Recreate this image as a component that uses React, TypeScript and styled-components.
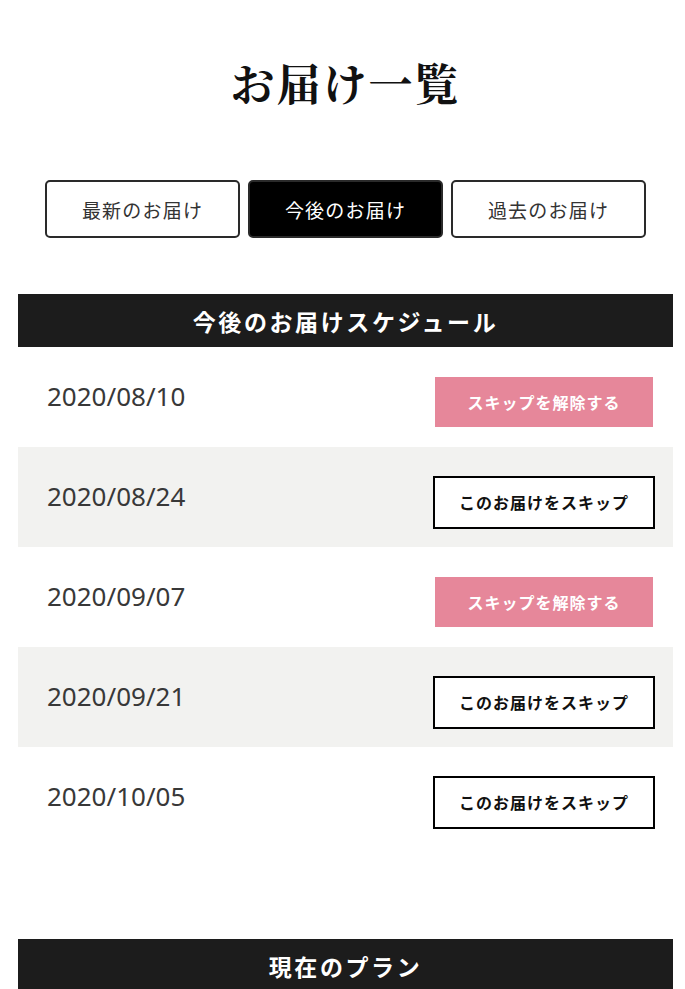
import styled, { createGlobalStyle } from "styled-components";

const GlobalStyle = createGlobalStyle`
  body {
    margin: 0;
    background: #ffffff;
    font-family: "Noto Sans CJK JP", "Noto Sans", sans-serif;
  }
`;

const Page = styled.div`
  width: 655px;
  margin-left: 18px;
  padding-top: 49px;
`;

const Title = styled.h1`
  margin: 0;
  height: 66px;
  line-height: 66px;
  text-align: center;
  font-family: "Noto Serif CJK JP", "Noto Sans CJK JP", serif;
  font-size: 44px;
  font-weight: 700;
  letter-spacing: 2px;
  color: #111;
`;

const Tabs = styled.div`
  display: grid;
  grid-template-columns: repeat(3, 195px);
  gap: 8px;
  justify-content: center;
  margin-top: 65px;
`;

const Tab = styled.button<{ $active?: boolean }>`
  height: 58px;
  box-sizing: border-box;
  border: 2px solid #2a2a2a;
  border-radius: 5px;
  background: ${(p) => (p.$active ? "#000" : "#fff")};
  color: ${(p) => (p.$active ? "#fff" : "#333")};
  font-family: "Noto Sans CJK JP", sans-serif;
  font-size: 19px;
  letter-spacing: 1.2px;
  padding: 0;
`;

const SectionHead = styled.h2<{ $gap?: number }>`
  margin: ${(p) => p.$gap ?? 0}px 0 0;
  height: 53px;
  background: #1c1c1c;
  color: #fff;
  display: flex;
  align-items: center;
  justify-content: center;
  font-size: 23px;
  font-weight: 700;
  letter-spacing: 2.6px;
`;

const List = styled.div`
  display: flex;
  flex-direction: column;
`;

const Row = styled.div<{ $shade?: boolean }>`
  height: 100px;
  display: flex;
  align-items: center;
  justify-content: space-between;
  padding: 0 18px 0 29px;
  background: ${(p) => (p.$shade ? "#f2f2f0" : "#fff")};
`;

const DateText = styled.span`
  font-family: "Noto Sans", sans-serif;
  font-size: 26px;
  color: #383838;
  margin-top: -2px;
`;

const ActionButton = styled.button<{ $skipped?: boolean }>`
  box-sizing: border-box;
  margin-top: 10px;
  width: ${(p) => (p.$skipped ? "218px" : "222px")};
  height: ${(p) => (p.$skipped ? "50px" : "53px")};
  margin-right: ${(p) => (p.$skipped ? "2px" : "0")};
  border: ${(p) => (p.$skipped ? "none" : "2px solid #000")};
  background: ${(p) => (p.$skipped ? "#e6879a" : "#fff")};
  color: ${(p) => (p.$skipped ? "#fff" : "#111")};
  font-family: "Noto Sans CJK JP", sans-serif;
  font-size: 16px;
  font-weight: 700;
  letter-spacing: 1px;
  padding: 0;
`;

const deliveries = [
  { date: "2020/08/10", skipped: true },
  { date: "2020/08/24", skipped: false },
  { date: "2020/09/07", skipped: true },
  { date: "2020/09/21", skipped: false },
  { date: "2020/10/05", skipped: false },
];

const App = () => {
  return (
    <Page>
      <GlobalStyle />
      <Title>お届け一覧</Title>
      <Tabs>
        <Tab>最新のお届け</Tab>
        <Tab $active>今後のお届け</Tab>
        <Tab>過去のお届け</Tab>
      </Tabs>
      <SectionHead $gap={56}>今後のお届けスケジュール</SectionHead>
      <List>
        {deliveries.map((d, i) => (
          <Row key={d.date} $shade={i % 2 === 1}>
            <DateText>{d.date}</DateText>
            <ActionButton $skipped={d.skipped}>
              {d.skipped ? "スキップを解除する" : "このお届けをスキップ"}
            </ActionButton>
          </Row>
        ))}
      </List>
      <SectionHead $gap={92}>現在のプラン</SectionHead>
    </Page>
  );
};

export default App;
